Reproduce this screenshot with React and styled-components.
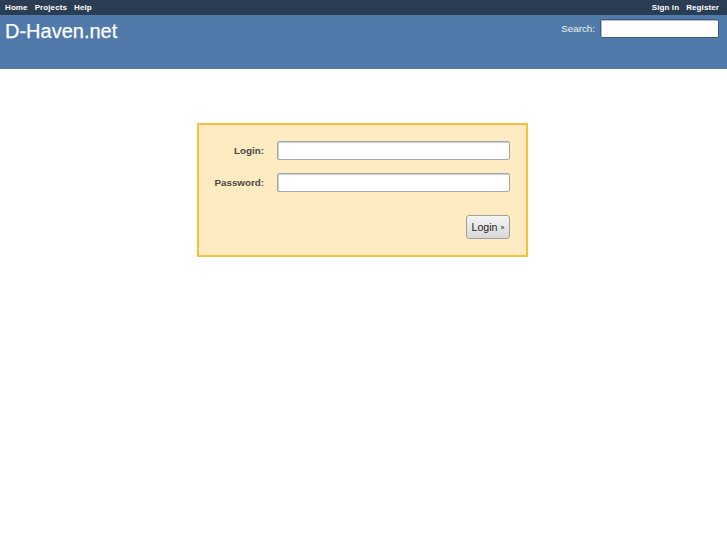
import React from "react";
import styled, { createGlobalStyle } from "styled-components";

const Global = createGlobalStyle`
  html, body { margin: 0; padding: 0; background: #fff; }
  body { font-family: "Liberation Sans", Arial, sans-serif; font-size: 9.6px; color: #333; }
  * { box-sizing: border-box; }
`;

const TopMenu = styled.div`
  height: 15px;
  background: #2b3d52;
  display: flex;
  align-items: center;
  justify-content: space-between;
  padding: 0 8px 0 5px;
`;

const MenuGroup = styled.div`
  display: flex;
  gap: 7px;
`;

const MenuLink = styled.a`
  color: #fff;
  font-weight: bold;
  font-size: 8px;
  text-decoration: none;
  letter-spacing: 0.1px;
`;

const Header = styled.div`
  height: 54px;
  background: #507aaa;
  display: flex;
  justify-content: space-between;
  align-items: flex-start;
  padding: 4px 8px 0 5px;
`;

const Title = styled.h1`
  margin: 0;
  font-family: "Liberation Sans", Arial, sans-serif;
  font-weight: normal;
  font-size: 20px;
  line-height: 24px;
  color: #fff;
  -webkit-text-stroke: 0.25px #fff;
`;

const SearchWrap = styled.div`
  display: flex;
  align-items: center;
  gap: 5px;
  color: #f0f0f0;
  font-size: 9.8px;
`;

const SearchInput = styled.input`
  width: 119px;
  height: 19px;
  border: 1px solid #3a5a80;
  border-radius: 2px;
  background: #fff;
  padding: 1px 3px;
  box-shadow: inset 1px 1px 0 #bbb;
`;

const Main = styled.div`
  display: flex;
  justify-content: center;
  padding: 54px 2px 0 0;
`;

const Box = styled.form`
  width: 331px;
  border: 2px solid #fdbf3b;
  background: #ffebc1;
  padding: 16px;
  display: grid;
  grid-template-columns: 49px 1fr;
  column-gap: 13px;
  row-gap: 13px;
  align-items: center;
`;

const Label = styled.label`
  justify-self: end;
  font-weight: bold;
  font-size: 9.8px;
  color: #484848;
  white-space: nowrap;
`;

const Field = styled.input`
  width: 100%;
  height: 19px;
  border: 1px solid #a8a8a8;
  border-radius: 2px;
  background: #fff;
  box-shadow: inset 1px 1px 1px #c8c8c8;
  padding: 1px 3px;
  font-size: 10px;
`;

const ButtonRow = styled.div`
  grid-column: 1 / span 2;
  display: flex;
  justify-content: flex-end;
  margin-top: 10px;
`;

const Button = styled.button`
  width: 44px;
  height: 24px;
  padding: 0;
  border: 1px solid #a0a0a0;
  border-radius: 3px;
  background: linear-gradient(#f4f4f4, #d9d9d9);
  color: #222;
  font-family: "Liberation Sans", Arial, sans-serif;
  font-size: 10.6px;
  display: flex;
  align-items: center;
  justify-content: center;
  gap: 3px;
`;

const Raquo = styled.span`
  font-size: 7px;
`;

export default function App() {
  return (
    <>
      <Global />
      <TopMenu>
        <MenuGroup>
          <MenuLink href="#">Home</MenuLink>
          <MenuLink href="#">Projects</MenuLink>
          <MenuLink href="#">Help</MenuLink>
        </MenuGroup>
        <MenuGroup>
          <MenuLink href="#">Sign in</MenuLink>
          <MenuLink href="#">Register</MenuLink>
        </MenuGroup>
      </TopMenu>
      <Header>
        <Title>D-Haven.net</Title>
        <SearchWrap>
          <span>Search:</span>
          <SearchInput />
        </SearchWrap>
      </Header>
      <Main>
        <Box onSubmit={(e) => e.preventDefault()}>
          <Label>Login:</Label>
          <Field type="text" />
          <Label>Password:</Label>
          <Field type="password" />
          <ButtonRow>
            <Button type="submit">
              Login <Raquo>»</Raquo>
            </Button>
          </ButtonRow>
        </Box>
      </Main>
    </>
  );
}
